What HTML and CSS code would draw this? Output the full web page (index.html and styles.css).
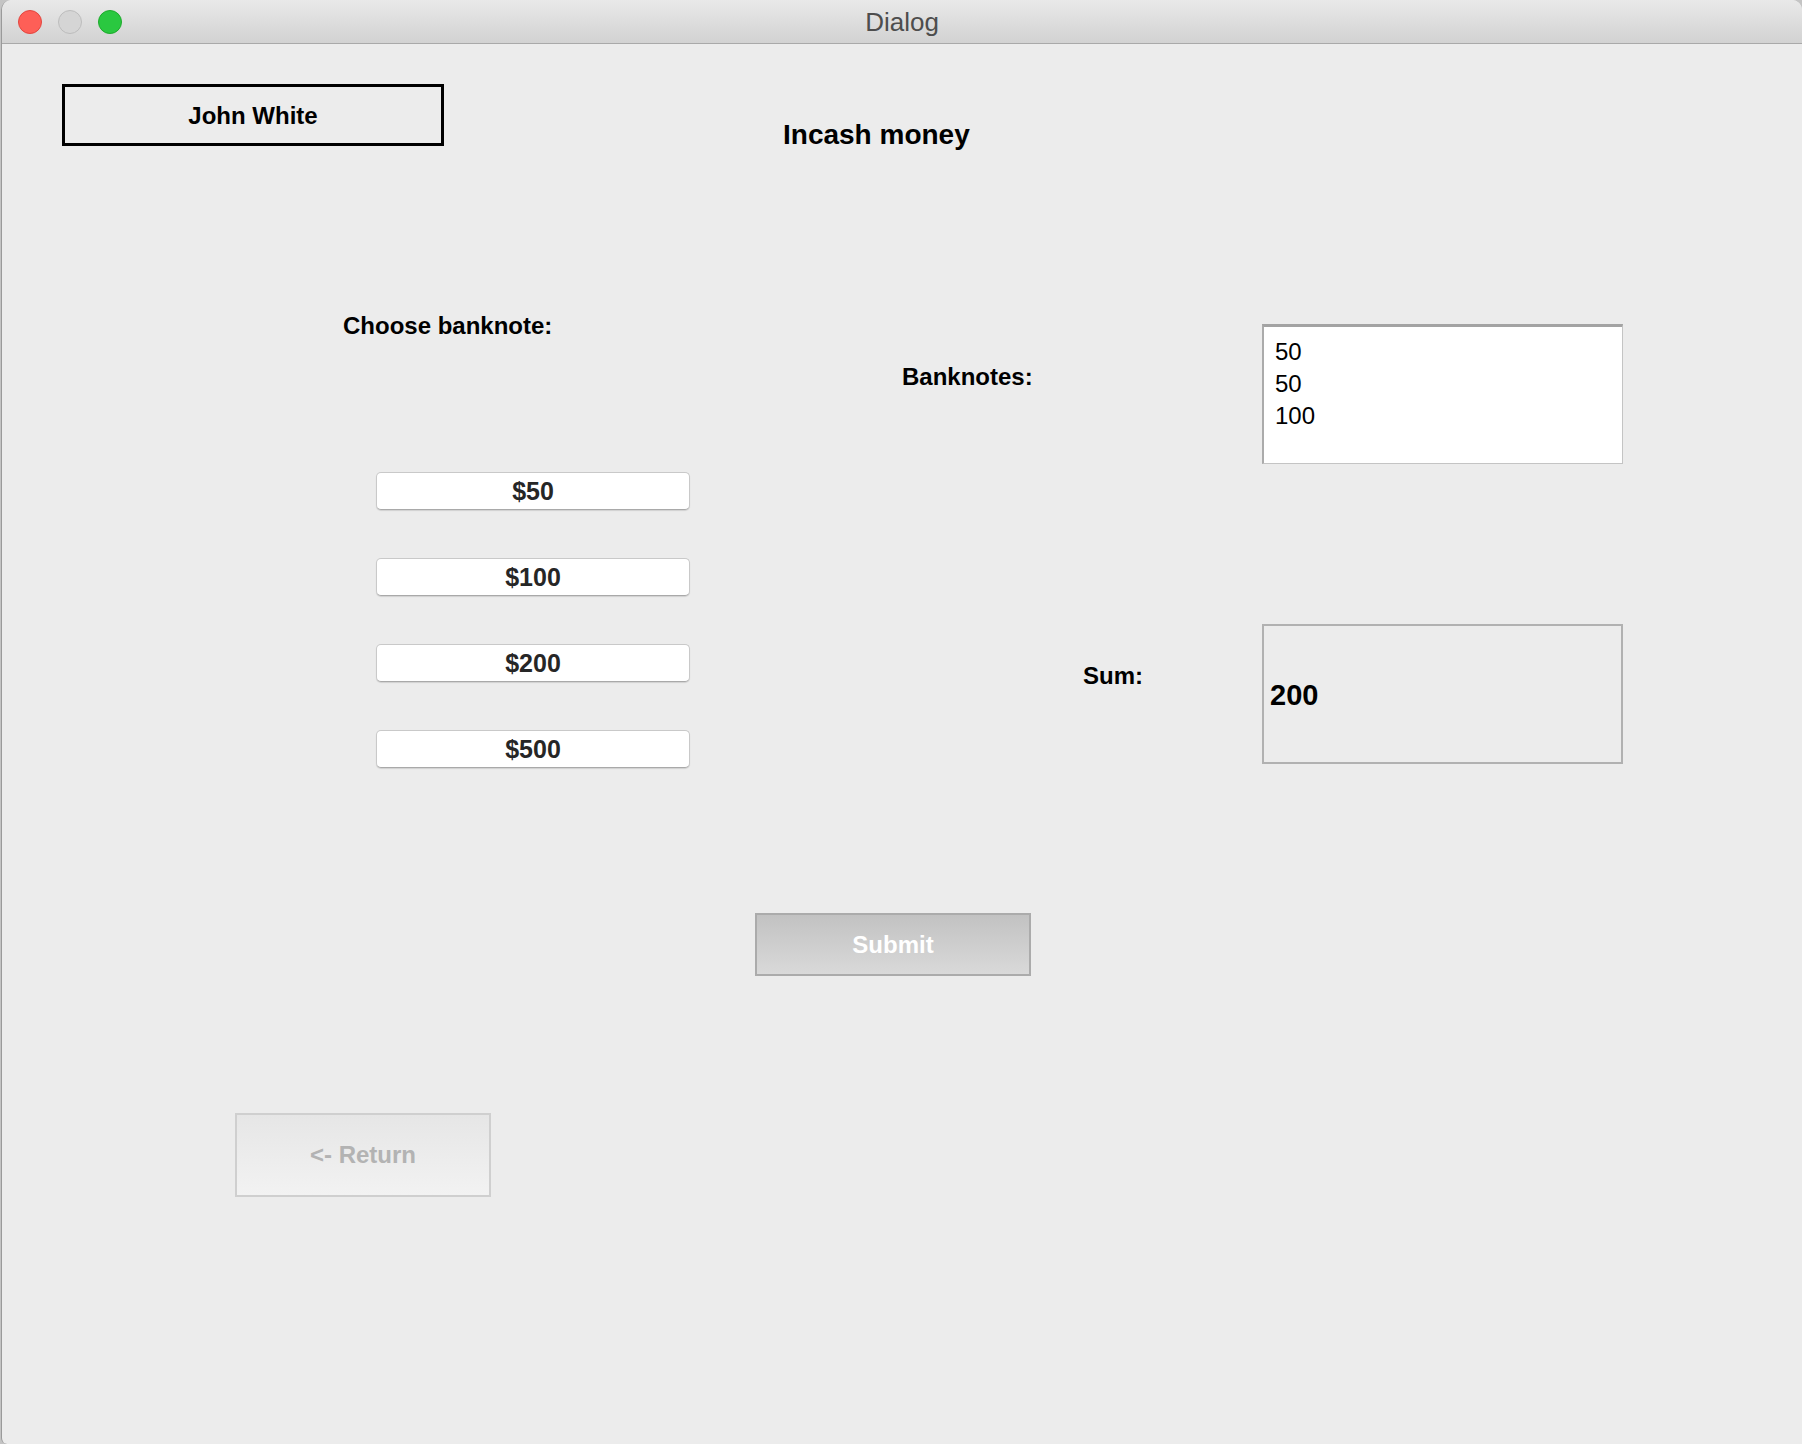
FILE: index.html
```html
<!DOCTYPE html>
<html lang="en">
<head>
<meta charset="utf-8">
<title>Dialog</title>
<link rel="stylesheet" href="styles.css">
</head>
<body>
<div class="window">
  <div class="titlebar">
    <div class="lights">
      <span class="light red"></span>
      <span class="light gray"></span>
      <span class="light green"></span>
    </div>
    <div class="title">Dialog</div>
  </div>
  <div class="content">
    <div class="header">
      <div class="user-box">John White</div>
      <h1 class="page-title">Incash money</h1>
    </div>
    <div class="main">
      <div class="choose-col">
        <div class="label">Choose banknote:</div>
        <div class="note-buttons">
          <button class="note-btn">$50</button>
          <button class="note-btn">$100</button>
          <button class="note-btn">$200</button>
          <button class="note-btn">$500</button>
        </div>
      </div>
      <div class="result-col">
        <div class="result-row">
          <div class="label banknotes-label">Banknotes:</div>
          <div class="list-box">
            <div class="list-item">50</div>
            <div class="list-item">50</div>
            <div class="list-item">100</div>
          </div>
        </div>
        <div class="result-row sum-row">
          <div class="label sum-label">Sum:</div>
          <div class="sum-box">200</div>
        </div>
      </div>
    </div>
    <button class="submit-btn">Submit</button>
    <button class="return-btn">&lt;- Return</button>
  </div>
</div>
</body>
</html>
```
FILE: styles.css
```css
* { box-sizing: border-box; }

html, body {
  margin: 0;
  padding: 0;
}

body {
  background: #c4c4c4;
  font-family: "Liberation Sans", Arial, sans-serif;
  width: 1802px;
  height: 1444px;
  overflow: hidden;
}

.window {
  margin-left: 1px;
  width: 1801px;
  height: 1444px;
  background: #ececec;
  border-left: 1px solid #9a9a9a;
  border-radius: 10px 10px 0 6px;
  overflow: hidden;
}

.titlebar {
  position: relative;
  height: 44px;
  background: linear-gradient(#e9e9e9, #d2d2d2);
  border-bottom: 1px solid #a9a9a9;
  display: flex;
  align-items: flex-start;
  justify-content: center;
}

.lights {
  position: absolute;
  left: 16px;
  top: 10px;
  display: flex;
  gap: 16px;
}

.light {
  width: 24px;
  height: 24px;
  border-radius: 50%;
  display: block;
}
.light.red { background: #fe5f57; border: 1px solid #e2463f; }
.light.gray { background: #d5d5d5; border: 1px solid #bcbcbc; }
.light.green { background: #2ac840; border: 1px solid #1eaa2c; }

.title {
  font-size: 26px;
  line-height: 43px;
  padding-top: 1px;
  color: #4d4d4d;
}

.content {
  display: flex;
  flex-direction: column;
  align-items: flex-start;
}

.header {
  display: flex;
  align-items: flex-start;
  margin-top: 40px;
}

.user-box {
  margin-left: 60px;
  width: 382px;
  height: 62px;
  border: 3px solid #000;
  display: flex;
  align-items: center;
  justify-content: center;
  padding-top: 1px;
  font-size: 24px;
  font-weight: bold;
  color: #000;
}

.page-title {
  margin: 35px 0 0 339px;
  font-size: 28px;
  line-height: 32px;
  font-weight: bold;
  color: #000;
}

.main {
  display: flex;
  align-items: flex-start;
  margin-top: 161px;
  padding-left: 341px;
}

.label {
  font-size: 24px;
  line-height: 28px;
  font-weight: bold;
  color: #000;
}

.choose-col {
  width: 347px;
}

.note-buttons {
  margin-top: 132px;
  padding-left: 33px;
  display: flex;
  flex-direction: column;
  gap: 48px;
}

.note-btn {
  appearance: none;
  width: 314px;
  height: 38px;
  margin: 0;
  padding: 0;
  background: #fff;
  border: 1px solid #c9c9c9;
  border-bottom-color: #a9a9a9;
  border-radius: 5px;
  box-shadow: 0 1px 1px rgba(0, 0, 0, 0.12);
  font-family: "Liberation Sans", Arial, sans-serif;
  font-size: 25px;
  font-weight: bold;
  color: #262626;
  line-height: 36px;
}

.result-col {
  margin-top: 12px;
  display: flex;
  flex-direction: column;
}

.result-row {
  display: grid;
  grid-template-columns: 572px 361px;
  align-items: start;
}

.sum-row {
  margin-top: 160px;
}

.banknotes-label {
  padding-left: 212px;
  padding-top: 39px;
}

.sum-label {
  padding-left: 393px;
  padding-top: 38px;
}

.list-box {
  height: 140px;
  background: #fff;
  border-top: 3px solid #a3a3a3;
  border-left: 2px solid #ababab;
  border-right: 1px solid #c4c4c4;
  border-bottom: 1px solid #c4c4c4;
  padding: 9px 10px 0 11px;
}

.list-item {
  font-size: 24px;
  line-height: 32px;
  color: #000;
}

.sum-box {
  height: 140px;
  border: 2px solid #b1b1b1;
  background: #ececec;
  display: flex;
  align-items: center;
  padding-left: 6px;
  padding-top: 2px;
  font-size: 29px;
  font-weight: bold;
  color: #000;
}

.submit-btn {
  appearance: none;
  margin: 145px 0 0 753px;
  width: 276px;
  height: 63px;
  padding: 0;
  border: 2px solid #ababab;
  background: linear-gradient(#c2c2c2, #d9d9d9);
  font-family: "Liberation Sans", Arial, sans-serif;
  font-size: 24px;
  font-weight: bold;
  color: #fff;
}

.return-btn {
  appearance: none;
  margin: 137px 0 0 233px;
  width: 256px;
  height: 84px;
  padding: 0;
  border: 2px solid #cfcfcf;
  background: linear-gradient(#e6e6e6, #f2f2f2);
  font-family: "Liberation Sans", Arial, sans-serif;
  font-size: 24px;
  font-weight: bold;
  color: #b3b3b3;
}
```
